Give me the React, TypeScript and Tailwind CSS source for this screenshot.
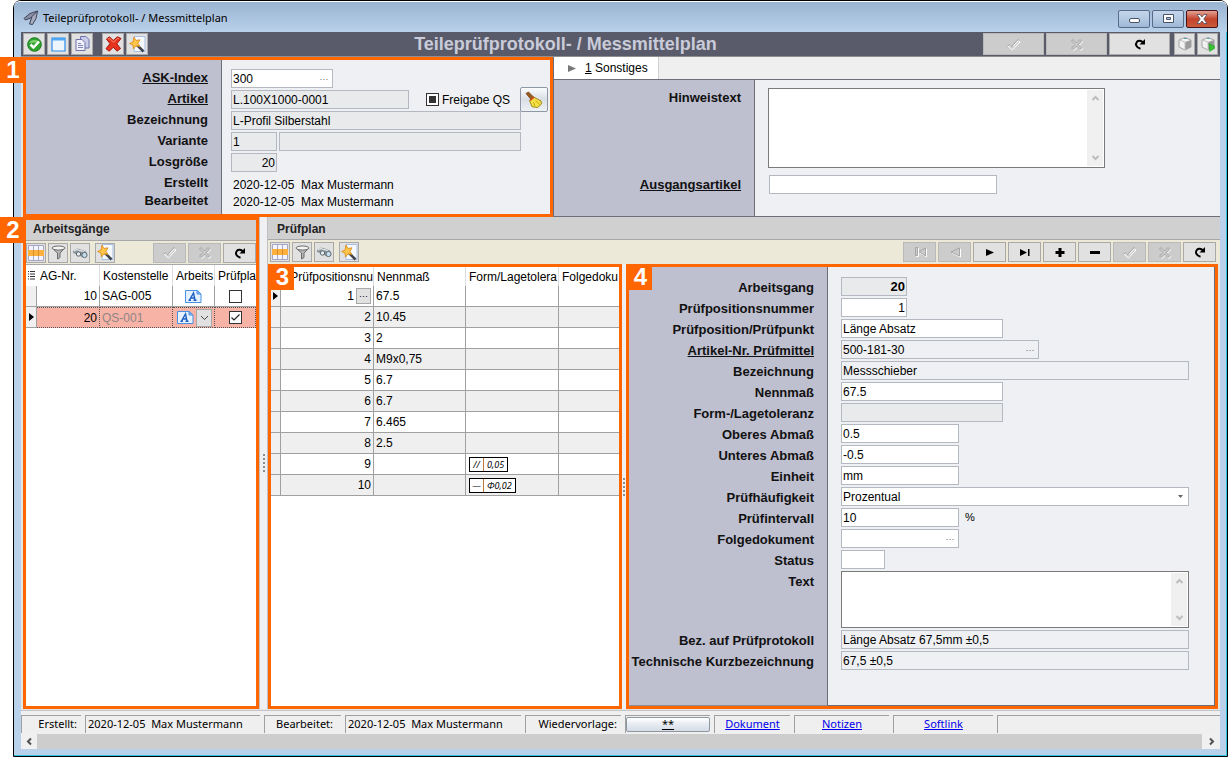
import type { ReactNode } from 'react';
import { clsx } from 'clsx';

const BTN = 'flex shrink-0 items-center justify-center border border-[#a9a9a9] bg-[#e1e1e1]';
const BTN_OFF = 'flex shrink-0 items-center justify-center border border-[#b9b9b9] bg-[#cccccc]';
const LABEL = 'block whitespace-nowrap text-right text-[13px] font-bold leading-[19px] text-[#111]';

/* ---------- icons ---------- */

function CheckIcon() {
  return (
    <svg width="15" height="13" viewBox="0 0 15 13" fill="none">
      <path d="M2 8l2-1.500 2.500 2.500L12.500 2.500l1.500 1.500-7.500 8z" fill="#cccccc" stroke="#fff" />
      <path d="M6.500 9 4 6.500 1.500 8M5.500 8.500 12 1.500l1 1" stroke="#a3a3a3" />
    </svg>
  );
}

function CrossIcon() {
  const outline = 'M1.500 3 3 1.500l3.500 3.500L10 1.500 11.500 3 8 6.500l3.500 3.500-1.500 1.500L6.500 8 3 11.500 1.500 10 5 6.500z';
  return (
    <svg width="13" height="13" viewBox="0 0 13 13" fill="none">
      <path d={outline} stroke="#fff" transform="translate(1 1)" />
      <path d={outline} fill="#cccccc" stroke="#a3a3a3" />
    </svg>
  );
}

function RefreshIcon() {
  return (
    <svg width="12" height="12" viewBox="0 0 12 12" fill="none">
      <path d="M6.500 10.800C2 9.500 1 6 3 3.800 4.500 2.300 7 2.500 9 4.500" stroke="#000" strokeWidth="2" />
      <path d="M11 1v5.500H5.500z" fill="#000" />
    </svg>
  );
}

function WizardIcon() {
  return (
    <svg width="17" height="17" viewBox="0 0 17 17" fill="none">
      <path d="M5 .5h11v15H5z" fill="#f4f8ff" stroke="#a9bfdf" />
      <path d="M8 9l6.500 6.500" stroke="#3f4450" strokeWidth="2.500" />
      <path d="M5 1l2 3.500 4-.7-2 3.700 2 3-4-.7L4.500 13 4 9 .5 7.500 4 6z" fill="#ffc54a" stroke="#d98a12" strokeWidth=".8" />
    </svg>
  );
}

function GridIcon() {
  return (
    <svg width="16" height="16" viewBox="0 0 16 16">
      <path d="M.5.5h15v15H.5z" fill="#f4f4fc" stroke="#a4a4c4" />
      <path d="M5.500 1v14M10.500 1v14" stroke="#a9a9c9" />
      <path d="M0 5h16v6H0z" fill="#fbb040" />
      <path d="M5.500 5v6M10.500 5v6" stroke="#d98f2a" />
    </svg>
  );
}

function FunnelIcon() {
  return (
    <svg width="15" height="15" viewBox="0 0 15 15">
      <path d="M1 3l5.500 5v6l2.500-1.500V8L14 3z" fill="#b5b5b5" stroke="#6d6d6d" />
      <ellipse cx="7.500" cy="3" rx="6.500" ry="2" fill="#f4f4f4" stroke="#6d6d6d" />
    </svg>
  );
}

function BinocularsIcon() {
  return (
    <svg width="16" height="12" viewBox="0 0 16 12">
      <path d="M1 4 5 1.500l4 1 5 2 1 3-4 3-5-2.500-5-2z" fill="#8d979c" />
      <path d="M2 4l3-1.500 3 1.500M7 4l2-.5 3 1.500" fill="none" stroke="#dfe5e8" strokeWidth="1.300" />
      <circle cx="6.500" cy="7" r="2.200" fill="#e3eaf0" stroke="#5d676e" />
      <circle cx="12.500" cy="8" r="2.600" fill="#c4def2" stroke="#5d676e" />
    </svg>
  );
}

function OkIcon() {
  return (
    <svg width="15" height="15" viewBox="0 0 15 15" fill="none">
      <circle cx="7.500" cy="7.500" r="6.800" fill="#2fa32f" stroke="#187a1a" />
      <path d="M2 6a6 5 0 0 1 11 0q-5-1-11 0z" fill="#7fd070" />
      <path d="M3.500 7.500 6.500 10.500l5.500-6" stroke="#fff" strokeWidth="2.500" />
    </svg>
  );
}

function WindowIcon() {
  return (
    <svg width="15" height="15" viewBox="0 0 15 15">
      <path d="M1 1h13v13H1z" fill="#edf5ff" stroke="#2b8be8" strokeWidth="1.200" />
      <path d="M1 1h13v2.500H1z" fill="#4ea6f5" />
    </svg>
  );
}

function CopyIcon() {
  return (
    <svg width="15" height="16" viewBox="0 0 15 16" fill="none">
      <path d="M5.500.5h5.500l3 3v8.500H5.500z" fill="#c9cdea" stroke="#6d73a8" />
      <path d="M1 3.500h6l3 3v8H1z" fill="#f0f1fa" stroke="#6d73a8" />
      <path d="M3 7.500h3M3 9.500h5M3 11.500h5" stroke="#7f86b8" />
    </svg>
  );
}

function DeleteIcon() {
  return (
    <svg width="17" height="16" viewBox="0 0 17 16">
      <path d="M1.500 3 4.500.8 8.200 4.500 12.500.8 16 2.500 11.800 7.800l3.700 4.700-3.500 2.700-3.700-4-4 4L1 12.700l4-5z" fill="#e8341f" stroke="#a51408" />
      <path d="M3 3.200l1.500-1 4 4 4-4 1.500.8" fill="none" stroke="#ff8f78" />
    </svg>
  );
}

function CubeIcon({ play }: { play?: boolean }) {
  return (
    <svg width="16" height="16" viewBox="0 0 16 16">
      <path d="M2 4l6-2.500L14 4v7l-6 3-6-3z" fill="#f2f2f2" stroke="#a5a5a5" />
      <path d="M8 6l6-2v7l-6 3z" fill="#9b9b9b" />
      <path d="M2 4l6 2v8" fill="none" stroke="#c2c2c2" />
      <path d="M7 2.500h3" stroke="#5fa9b5" />
      {play && <path d="M9 7.500 14.500 10v2.500l-5 3z" fill="#35c235" stroke="#1c921c" strokeWidth=".5" />}
    </svg>
  );
}

function BroomIcon() {
  return (
    <svg width="18" height="18" viewBox="0 0 18 18">
      <path d="M1 2.500 3.500 1l5 5-2.500 2.500z" fill="#9a5b1f" stroke="#6a3a0c" strokeWidth=".7" />
      <path d="M8.500 6l7.500 4 .5 3-4 3.500-5.500-.8L4.500 9.500z" fill="#f6e04a" stroke="#a08a10" />
      <path d="M5 9.500 9 6.200" stroke="#d1421c" strokeWidth="1.500" />
      <path d="M8.500 11l1.500 4M10.500 9.500l4 4" stroke="#c7ac1e" />
    </svg>
  );
}

function DocIcon() {
  return (
    <svg width="17" height="13" viewBox="0 0 17 13" fill="none">
      <path d="M.5.5H12l4 3.500v8.500H.5z" fill="#e6f1ff" stroke="#4a90e2" />
      <path d="M12 .5V4h4z" fill="#8fbdf2" stroke="#4a90e2" />
      <path d="M4.500 10 8.500 3l1.500 7M6 8h3.500M3.500 10.300h2.500M8.500 10.300h3" stroke="#1e5fc4" strokeWidth="1.400" />
    </svg>
  );
}

function Tri({ kind }: { kind: 'first' | 'prev' | 'next' | 'last' | 'plus' | 'minus' }) {
  return (
    <svg width="14" height="11" viewBox="0 0 14 11" fill="none">
      {kind === 'first' && (
        <>
          <path d="M3.500 1.500v8h2v-8zM13.500 2v8L7 6z" stroke="#fff" />
          <path d="M2.500.5v8h2v-8zM12.500 1v8L6 4.500z" fill="#ccc" stroke="#a6a6a6" />
        </>
      )}
      {kind === 'prev' && (
        <>
          <path d="M12.500 2v8L4 6z" stroke="#fff" />
          <path d="M11.500 1v8L3 5z" fill="#ccc" stroke="#a6a6a6" />
        </>
      )}
      {kind === 'next' && <path d="M3 2v7l8-3.500z" fill="#000" />}
      {kind === 'last' && <path d="M2 2v7l7-3.500zM10 2h1.500v7H10z" fill="#000" />}
      {kind === 'plus' && <path d="M2.500 4h3V1h3v3h3v3h-3v3h-3V7h-3z" fill="#000" />}
      {kind === 'minus' && <path d="M2 4h10v3H2z" fill="#000" />}
    </svg>
  );
}

function Chevron({ dir, dark }: { dir: 'up' | 'down' | 'left' | 'right'; dark?: boolean }) {
  const paths = {
    up: 'M1.500 6 4.500 3l3 3',
    down: 'M1.500 3l3 3 3-3',
    left: 'M6 1.500l-3 3 3 3',
    right: 'M3 1.500l3 3-3 3',
  };
  return (
    <svg width="9" height="9" viewBox="0 0 9 9" fill="none">
      <path d={paths[dir]} stroke={dark ? '#505050' : '#bdbdbd'} strokeWidth="2" />
    </svg>
  );
}

/* ---------- building blocks ---------- */

function Badge({ n, outside }: { n: number; outside?: boolean }) {
  return (
    <div
      className={clsx(
        'absolute z-10 flex h-[26px] items-center justify-center bg-[#ff6600] text-2xl font-bold text-white',
        outside ? 'top-[-3px] left-[-26px] w-[26px]' : 'top-[-3px] left-0 w-[23px]'
      )}
    >
      {n}
    </div>
  );
}

interface FieldProps {
  id: string;
  value?: string;
  width: string;
  tone?: 'edit' | 'grey' | 'flat';
  right?: boolean;
  bold?: boolean;
  dots?: boolean;
}

function Field({ id, value = '', width, tone = 'edit', right, bold, dots }: FieldProps) {
  return (
    <div
      className={clsx(
        'flex h-[19px] border border-[#b4b8c0]',
        width,
        tone === 'edit' && 'bg-white',
        tone === 'grey' && 'bg-[#e9eaec]',
        tone === 'flat' && 'bg-[#eff0f3]'
      )}
    >
      <input
        id={id}
        defaultValue={value}
        readOnly={tone !== 'edit'}
        className={clsx(
          'min-w-0 flex-1 bg-transparent px-px outline-none',
          right && 'text-right',
          bold ? 'text-[13px] font-bold' : 'text-xs'
        )}
      />
      {dots && (
        <button aria-label="Auswählen" className="w-4 text-[9px] leading-3 text-[#666]">
          ···
        </button>
      )}
    </div>
  );
}

function Memo({ id, className }: { id: string; className: string }) {
  return (
    <div className={clsx('flex border border-[#7a7a7a] bg-white p-px', className)}>
      <textarea id={id} className="min-w-0 flex-1 resize-none text-xs outline-none" />
      <div className="flex w-4 flex-col items-center justify-between bg-[#f0f0f0] py-1">
        <Chevron dir="up" />
        <Chevron dir="down" />
      </div>
    </div>
  );
}

function Tools() {
  const icons = [
    { name: 'Spalten', icon: <GridIcon /> },
    { name: 'Filter', icon: <FunnelIcon /> },
    { name: 'Suchen', icon: <BinocularsIcon /> },
    { name: 'Assistent', icon: <WizardIcon /> },
  ];
  return (
    <div className="flex gap-[2px]">
      {icons.map((i) => (
        <button key={i.name} aria-label={i.name} className={clsx(BTN, 'h-5 w-5 last:ml-[3px]')}>
          {i.icon}
        </button>
      ))}
    </div>
  );
}

function ToolButton({ label, off, children }: { label: string; off?: boolean; children: ReactNode }) {
  return (
    <button aria-label={label} disabled={off} className={clsx(off ? BTN_OFF : BTN, 'h-5 w-[33px]')}>
      {children}
    </button>
  );
}

function TickBox({ label, checked }: { label: string; checked?: boolean }) {
  return (
    <span className="inline-grid size-[13px] place-items-center">
      <input
        type="checkbox"
        aria-label={label}
        defaultChecked={checked}
        className="col-start-1 row-start-1 size-[13px] appearance-none border border-[#333] bg-white"
      />
      {checked && (
        <svg className="pointer-events-none col-start-1 row-start-1" width="11" height="11" viewBox="0 0 11 11" fill="none">
          <path d="M1.500 5.500 4 8l5.500-5.500" stroke="#222" strokeWidth="1.200" />
        </svg>
      )}
    </span>
  );
}

function RowMark({ active }: { active?: boolean }) {
  return (
    <td className="border-r border-b border-[#a0a0a0] bg-[#f0f0f0] p-0">
      {active && (
        <svg className="mx-auto block" width="5" height="8" viewBox="0 0 5 8">
          <path d="M0 0v8l5-4z" fill="#000" />
        </svg>
      )}
    </td>
  );
}

function Grip() {
  return (
    <div className="flex flex-col gap-[2px]">
      {[0, 1, 2, 3, 4].map((i) => (
        <span key={i} className="h-[2px] w-[2px] bg-[#8c8c8c]" />
      ))}
    </div>
  );
}

/* ---------- data ---------- */

const POSITIONS = [
  { nr: 1, nenn: '67.5' },
  { nr: 2, nenn: '10.45' },
  { nr: 3, nenn: '2' },
  { nr: 4, nenn: 'M9x0,75' },
  { nr: 5, nenn: '6.7' },
  { nr: 6, nenn: '6.7' },
  { nr: 7, nenn: '6.465' },
  { nr: 8, nenn: '2.5' },
  { nr: 9, nenn: '', tol: ['//', '0,05'] },
  { nr: 10, nenn: '', tol: ['—', 'Φ0,02'] },
];

const DETAIL_LABELS = [
  { id: 'ag', text: 'Arbeitsgang' },
  { id: 'pos', text: 'Prüfpositionsnummer' },
  { id: 'punkt', text: 'Prüfposition/Prüfpunkt' },
  { id: 'mittel', text: 'Artikel-Nr. Prüfmittel', link: true },
  { id: 'bez', text: 'Bezeichnung' },
  { id: 'nenn', text: 'Nennmaß' },
  { id: 'form', text: 'Form-/Lagetoleranz' },
  { id: 'ober', text: 'Oberes Abmaß' },
  { id: 'unter', text: 'Unteres Abmaß' },
  { id: 'einheit', text: 'Einheit' },
  { id: 'haeufig', text: 'Prüfhäufigkeit' },
  { id: 'intervall', text: 'Prüfintervall' },
  { id: 'folge', text: 'Folgedokument' },
  { id: 'status', text: 'Status' },
  { id: 'text', text: 'Text', tall: true },
  { id: 'protokoll', text: 'Bez. auf Prüfprotokoll' },
  { id: 'kurz', text: 'Technische Kurzbezeichnung' },
];

const HEAD_CELL = 'overflow-hidden whitespace-nowrap border-r border-[#dcdcdc] p-0 pl-[3px] text-left font-normal last:border-r-0';
const CELL = 'overflow-hidden whitespace-nowrap border-r border-b border-[#a0a0a0] px-[2px] py-0 last:border-r-0';
const CELL_ACTIVE = 'overflow-hidden whitespace-nowrap border-t border-r border-b border-dotted border-[#555] px-[2px] py-0';

/* ---------- sections ---------- */

function TitleBar() {
  return (
    <div className="flex h-[31px] items-center rounded-t-md border-t border-white bg-linear-to-b from-[#9ab3d1] to-[#b9d1ea] px-[9px] pt-[3px]">
      <svg width="16" height="17" viewBox="0 0 16 17" fill="none">
        <path d="M14.500 1 7 3.500 1 8.500l1.500 1.500L10 7z" fill="#8b8fa6" stroke="#3d4157" />
        <path d="M14.500 1 9 6.500l-2.500 7.500 3 .5 3.500-6z" fill="#a9acbf" stroke="#3d4157" />
      </svg>
      <span className="ml-1 flex-1 font-['Noto_Sans','Open_Sans',sans-serif] text-[11px] text-black">
        Teileprüfprotokoll- / Messmittelplan
      </span>
      <div className="flex gap-[2px]">
        <button aria-label="Minimieren" className="flex h-[18px] w-8 items-center justify-center rounded-xs border border-[#566b8a] bg-linear-to-b from-[#c4d5ea] via-[#b4c9e2] to-[#9db8d6] pt-1">
          <span className="h-[5px] w-[11px] rounded-xs border border-[#4a5468] bg-white" />
        </button>
        <button aria-label="Maximieren" className="flex h-[18px] w-8 items-center justify-center rounded-xs border border-[#566b8a] bg-linear-to-b from-[#c4d5ea] via-[#b4c9e2] to-[#9db8d6]">
          <svg width="11" height="9" viewBox="0 0 11 9">
            <path d="M.5.5h10v8H.5z" fill="#fff" stroke="#4a5468" />
            <path d="M3.500 3.500h4v2h-4z" fill="#a9c0dc" stroke="#4a5468" />
          </svg>
        </button>
        <button aria-label="Schließen" className="flex h-[18px] w-8 items-center justify-center rounded-xs border border-[#4b1216] bg-linear-to-b from-[#e2a295] via-[#c3432c] to-[#c95a3c]">
          <svg width="12" height="10" viewBox="0 0 12 10">
            <path d="M1 .5h3L6 3 8 .5h3L7.800 5 11 9.500H8L6 7 4 9.500H1L4.200 5z" fill="#fff" stroke="#4b4b5c" strokeWidth=".8" />
          </svg>
        </button>
      </div>
    </div>
  );
}

function MainToolbar() {
  const btn = clsx(BTN, 'size-[22px]');
  return (
    <div className="flex h-[25px] items-center border-b border-[#8f8f8f] bg-[#595b6b] px-[2px]">
      <div className="flex gap-[2px]">
        <button aria-label="Übernehmen" className={btn}><OkIcon /></button>
        <button aria-label="Fenster" className={btn}><WindowIcon /></button>
        <button aria-label="Kopieren" className={btn}><CopyIcon /></button>
        <button aria-label="Löschen" className={clsx(btn, 'ml-[7px]')}><DeleteIcon /></button>
        <button aria-label="Assistent" className={btn}><WizardIcon /></button>
      </div>
      <h1 className="flex-1 text-center text-lg leading-6 font-bold whitespace-nowrap text-[#c9cbd9]">
        Teileprüfprotokoll- / Messmittelplan
      </h1>
      <div className="flex gap-[2px]">
        <button aria-label="Speichern" disabled className={clsx(BTN_OFF, 'h-[22px] w-[61px]')}><CheckIcon /></button>
        <button aria-label="Verwerfen" disabled className={clsx(BTN_OFF, 'h-[22px] w-[61px]')}><CrossIcon /></button>
        <button aria-label="Aktualisieren" className={clsx(BTN, 'h-[22px] w-[61px]')}><RefreshIcon /></button>
        <button aria-label="Modul" className={clsx(BTN, 'ml-[2px] h-[22px] w-[21px]')}><CubeIcon /></button>
        <button aria-label="Modul starten" className={clsx(BTN, 'h-[22px] w-[21px]')}><CubeIcon play /></button>
      </div>
    </div>
  );
}

function HeadForm() {
  return (
    <section className="relative ml-[2px] flex w-[530px] shrink-0 border-3 border-[#ff6600] bg-[#eff0f3]">
      <Badge n={1} outside />
      <div className="flex w-[196px] shrink-0 flex-col gap-[2px] border-r border-[#6e6e78] bg-[#bebfcf] pt-2 pr-[13px]">
        <label htmlFor="index" className={clsx(LABEL, 'underline')}>ASK-Index</label>
        <label htmlFor="artikel" className={clsx(LABEL, 'underline')}>Artikel</label>
        <label htmlFor="bezeichnung" className={LABEL}>Bezeichnung</label>
        <label htmlFor="variante" className={LABEL}>Variante</label>
        <label htmlFor="los" className={LABEL}>Losgröße</label>
        <span className={LABEL}>Erstellt</span>
        <span className={clsx(LABEL, '-mt-[3px]')}>Bearbeitet</span>
      </div>
      <div className="flex flex-col gap-[2px] pt-[9px] pl-[9px]">
        <Field id="index" value="300" width="w-[102px]" dots />
        <div className="flex h-[19px] items-center">
          <Field id="artikel" value="L.100X1000-0001" width="w-[178px]" tone="grey" />
          <label className="ml-[17px] flex items-center gap-[3px] text-xs whitespace-nowrap">
            <input
              type="checkbox"
              className="size-[13px] appearance-none border border-[#333] bg-[#333] shadow-[inset_0_0_0_2px_white]"
            />
            Freigabe QS
          </label>
          <button
            aria-label="Leeren"
            className="ml-auto -mr-[27px] flex h-[25px] w-7 shrink-0 items-center justify-center rounded-xs border border-[#8e98a5] bg-linear-to-b from-[#fbfcfd] via-[#d9dfe6] to-[#eef1f4]"
          >
            <BroomIcon />
          </button>
        </div>
        <Field id="bezeichnung" value="L-Profil Silberstahl" width="w-[290px]" tone="grey" />
        <div className="flex gap-[2px]">
          <Field id="variante" value="1" width="w-[46px]" tone="grey" />
          <Field id="variante2" width="w-[242px]" tone="grey" />
        </div>
        <Field id="los" value="20" width="w-[46px]" tone="grey" right />
        <p className="mt-[3px] pl-[2px] text-xs leading-[17px] whitespace-pre">{'2020-12-05  Max Mustermann'}</p>
        <p className="-mt-[2px] pl-[2px] text-xs leading-[17px] whitespace-pre">{'2020-12-05  Max Mustermann'}</p>
      </div>
    </section>
  );
}

function MiscForm() {
  return (
    <section className="flex min-w-0 flex-1 flex-col border-b border-l border-[#6e6e78]">
      <div className="flex h-[23px] border-b border-[#6e6e78] bg-[#efefef]">
        <button className="flex items-center border-r border-[#d0d0d0] bg-white pr-[10px] pl-[14px] text-xs">
          <svg className="mr-[9px]" width="8" height="7" viewBox="0 0 8 7">
            <path d="M0 0v7l8-3.500z" fill="#777" />
          </svg>
          <span>
            <span className="underline">1</span> Sonstiges
          </span>
        </button>
      </div>
      <div className="flex flex-1">
        <div className="flex w-[201px] shrink-0 flex-col border-r border-[#6e6e78] bg-[#bebfcf] pt-2 pr-[13px]">
          <label htmlFor="hinweis" className={clsx(LABEL, 'h-[87px]')}>Hinweistext</label>
          <label htmlFor="ausgang" className={clsx(LABEL, 'underline')}>Ausgangsartikel</label>
        </div>
        <div className="flex flex-1 flex-col gap-[7px] bg-[#eff0f3] pt-2 pl-[13px]">
          <Memo id="hinweis" className="h-20 w-[337px]" />
          <div className="pl-px">
            <Field id="ausgang" width="w-[228px]" />
          </div>
        </div>
      </div>
    </section>
  );
}

function Operations() {
  return (
    <section className="relative ml-[2px] flex w-[236px] shrink-0 flex-col border-3 border-[#ff6600] bg-white">
      <Badge n={2} outside />
      <h2 className="h-5 bg-[#d0d0d0] pl-[7px] text-xs leading-[18px] font-bold text-[#222]">Arbeitsgänge</h2>
      <div className="flex h-[25px] items-center justify-between border-t border-b border-[#a8a8a8] bg-[#ece9d8]">
        <Tools />
        <div className="flex gap-[2px]">
          <ToolButton label="Speichern" off><CheckIcon /></ToolButton>
          <ToolButton label="Verwerfen" off><CrossIcon /></ToolButton>
          <ToolButton label="Aktualisieren"><RefreshIcon /></ToolButton>
        </div>
      </div>
      <table className="w-full table-fixed border-separate border-spacing-0 text-xs">
        <colgroup>
          <col className="w-[11px]" />
          <col className="w-[63px]" />
          <col className="w-[73px]" />
          <col className="w-[42px]" />
          <col />
        </colgroup>
        <thead>
          <tr className="h-[21px]">
            <th className="p-0">
              <svg className="mx-auto block" width="8" height="9" viewBox="0 0 8 9">
                <path d="M0 .5h1M2 .5h5M0 3h1M2 3h5M0 5.500h1M2 5.500h5M0 8h1M2 8h5" stroke="#333" />
              </svg>
            </th>
            <th className={HEAD_CELL}>AG-Nr.</th>
            <th className={HEAD_CELL}>Kostenstelle</th>
            <th className={HEAD_CELL}>Arbeits</th>
            <th className={HEAD_CELL}>Prüfpla</th>
          </tr>
        </thead>
        <tbody>
          <tr className="h-[21px]">
            <RowMark />
            <td className={clsx(CELL, 'text-right')}>10</td>
            <td className={CELL}>SAG-005</td>
            <td className={CELL}>
              <span className="flex justify-center"><DocIcon /></span>
            </td>
            <td className={CELL}>
              <span className="flex justify-center"><TickBox label="Prüfplan 10" /></span>
            </td>
          </tr>
          <tr className="h-[21px] bg-[#f7b3a6]">
            <RowMark active />
            <td className={clsx(CELL_ACTIVE, 'text-right')}>20</td>
            <td className={clsx(CELL_ACTIVE, 'text-[#8f8585]')}>QS-001</td>
            <td className={CELL_ACTIVE}>
              <span className="flex items-center justify-between pl-[2px]">
                <DocIcon />
                <button aria-label="Arbeitsanweisung wählen" className="flex h-[18px] w-4 items-center justify-center border border-[#a9a9a9] bg-[#e1e1e1]">
                  <svg width="9" height="6" viewBox="0 0 9 6" fill="none">
                    <path d="M1 1l3.500 3.500L8 1" stroke="#444" />
                  </svg>
                </button>
              </span>
            </td>
            <td className={CELL_ACTIVE}>
              <span className="flex justify-center"><TickBox label="Prüfplan 20" checked /></span>
            </td>
          </tr>
        </tbody>
      </table>
    </section>
  );
}

function PositionTable() {
  return (
    <section className="relative w-[354px] shrink-0 border-3 border-[#ff6600] bg-white">
      <Badge n={3} />
      <table className="w-full table-fixed border-separate border-spacing-0 text-xs">
        <colgroup>
          <col className="w-[10px]" />
          <col className="w-[93px]" />
          <col className="w-[92px]" />
          <col className="w-[93px]" />
          <col />
        </colgroup>
        <thead>
          <tr className="h-[19px]">
            <th className="p-0" />
            <th className={HEAD_CELL}>
              <span className="block text-right">Prüfpositionsnu</span>
            </th>
            <th className={HEAD_CELL}>Nennmaß</th>
            <th className={HEAD_CELL}>Form/Lagetolera</th>
            <th className={HEAD_CELL}>Folgedoku</th>
          </tr>
        </thead>
        <tbody>
          {POSITIONS.map((p) => (
            <tr key={p.nr} className="h-[21px] odd:bg-white even:bg-[#efefef]">
              <RowMark active={p.nr === 1} />
              <td className={clsx(CELL, 'text-right')}>
                {p.nr === 1 ? (
                  <span className="flex items-center justify-end gap-[2px]">
                    1
                    <button aria-label="Auswählen" className="h-4 w-[15px] border border-[#a9a9a9] bg-[#e1e1e1] text-[9px] leading-3">
                      ···
                    </button>
                  </span>
                ) : (
                  p.nr
                )}
              </td>
              <td className={CELL}>{p.nenn}</td>
              <td className={CELL}>
                {p.tol && (
                  <span className="ml-px flex h-[15px] w-fit border border-black bg-white font-['Noto_Sans',sans-serif] text-[9px] leading-[13px] italic">
                    <span className="w-[14px] border-r border-[#c07a40] text-center">{p.tol[0]}</span>
                    <span className="px-[3px]">{p.tol[1]}</span>
                  </span>
                )}
              </td>
              <td className={CELL} />
            </tr>
          ))}
        </tbody>
      </table>
    </section>
  );
}

function DetailForm() {
  return (
    <section className="relative mr-[2px] flex min-w-0 flex-1 border-3 border-[#ff6600] bg-[#eff0f3]">
      <Badge n={4} />
      <div className="flex w-[199px] shrink-0 flex-col gap-[2px] border-r border-b border-r-[#6e6e78] border-b-[#8d8d98] bg-[#bebfcf] pt-[11px] pr-[13px]">
        {DETAIL_LABELS.map((l) => (
          <label
            key={l.id}
            htmlFor={l.id}
            className={clsx(LABEL, 'flex justify-end', l.link && 'underline', l.tall ? 'h-[57px]' : 'h-[19px]')}
          >
            {l.text}
          </label>
        ))}
      </div>
      <div className="flex min-w-0 flex-1 flex-col gap-[2px] border-r border-b border-[#6e6e78] pt-[10px] pr-[25px] pl-[13px]">
        <Field id="ag" value="20" width="w-[66px]" tone="grey" right bold />
        <Field id="pos" value="1" width="w-[66px]" right />
        <Field id="punkt" value="Länge Absatz" width="w-[162px]" />
        <Field id="mittel" value="500-181-30" width="w-[198px]" tone="flat" dots />
        <Field id="bez" value="Messschieber" width="w-full" tone="flat" />
        <Field id="nenn" value="67.5" width="w-[162px]" />
        <Field id="form" width="w-[162px]" tone="grey" />
        <Field id="ober" value="0.5" width="w-[118px]" />
        <Field id="unter" value="-0.5" width="w-[118px]" />
        <Field id="einheit" value="mm" width="w-[118px]" />
        <div className="grid h-[19px] items-center">
          <select id="haeufig" className="col-start-1 row-start-1 h-[19px] w-full appearance-none border border-[#b4b8c0] bg-white px-px text-xs leading-4 outline-none">
            <option>Prozentual</option>
          </select>
          <svg className="pointer-events-none col-start-1 row-start-1 mr-[6px] justify-self-end" width="5" height="3" viewBox="0 0 5 3">
            <path d="M0 0h5L2.500 3z" fill="#666" />
          </svg>
        </div>
        <div className="flex h-[19px] items-center gap-[6px]">
          <Field id="intervall" value="10" width="w-[118px]" />
          <span className="text-[11px]">%</span>
        </div>
        <Field id="folge" width="w-[118px]" dots />
        <Field id="status" width="w-[44px]" />
        <Memo id="text" className="h-[57px] w-full" />
        <Field id="protokoll" value="Länge Absatz 67,5mm ±0,5" width="w-full" tone="flat" />
        <Field id="kurz" value="67,5 ±0,5" width="w-full" tone="flat" />
      </div>
    </section>
  );
}

function StatusBar() {
  const cell = 'flex h-[18px] shrink-0 items-center border-t border-l border-[#a0a0a0] whitespace-pre';
  return (
    <footer className="flex h-[24px] items-center gap-1 border-t border-[#c4c4c4] bg-[#efefef] pt-[2px] font-['Noto_Sans','Open_Sans',sans-serif] text-[11px]">
      <span className={clsx(cell, 'w-[60px] justify-end pr-1')}>Erstellt:</span>
      <span className={clsx(cell, 'w-[175px] pl-[2px]')}>{'2020-12-05  Max Mustermann'}</span>
      <span className={clsx(cell, 'w-[77px] justify-end pr-2')}>Bearbeitet:</span>
      <span className={clsx(cell, 'w-[176px] pl-[2px]')}>{'2020-12-05  Max Mustermann'}</span>
      <span className={clsx(cell, 'w-24 justify-end pr-1')}>Wiedervorlage:</span>
      <span className={clsx(cell, 'w-[85px]')}>
        <button aria-label="Wiedervorlage" className="flex h-[15px] flex-1 items-center justify-center rounded-xs border border-[#8e98a5] bg-linear-to-b from-white via-[#e6ebf1] to-[#d5dce5] leading-3 underline">
          **
        </button>
      </span>
      <span className={clsx(cell, 'w-[76px] justify-center')}><a href="#dokument" className="text-[#0000ee] underline">Dokument</a></span>
      <span className={clsx(cell, 'w-[95px] justify-center')}><a href="#notizen" className="text-[#0000ee] underline">Notizen</a></span>
      <span className={clsx(cell, 'w-[100px] justify-center')}><a href="#softlink" className="text-[#0000ee] underline">Softlink</a></span>
      <span className="h-[18px] flex-1 border-t border-l border-[#a0a0a0]" />
    </footer>
  );
}

export default function App() {
  return (
    <div className="flex min-h-screen bg-white pl-[13px] font-['Liberation_Sans',Arial,sans-serif] text-black">
      <div className="flex min-w-0 flex-1 flex-col rounded-t-lg border border-black bg-[#b9d1ea]">
        <TitleBar />
        <div className="flex flex-1 flex-col border-r border-b border-[#2fc4dd] pr-[6px] pb-[6px] pl-[7px]">
          <main className="flex flex-1 flex-col bg-[#e4e5e7]">
            <MainToolbar />
            <div className="flex h-[160px]">
              <HeadForm />
              <MiscForm />
            </div>
            <div className="flex flex-1 pb-px">
              <Operations />
              <div className="flex w-[9px] shrink-0 items-center justify-center border-x border-[#c0c0c4] bg-[#f0f0f2]">
                <Grip />
              </div>
              <div className="flex min-w-0 flex-1 flex-col">
                <h2 className="h-[22px] bg-[#d0d0d0] pl-[9px] text-xs leading-6 font-bold text-[#222]">Prüfplan</h2>
                <div className="flex h-[25px] items-center justify-between border-t border-[#a8a8a8] bg-[#ece9d8] pr-1 pl-[2px]">
                  <Tools />
                  <div className="flex gap-[2px]">
                    <ToolButton label="Erster" off><Tri kind="first" /></ToolButton>
                    <ToolButton label="Zurück" off><Tri kind="prev" /></ToolButton>
                    <ToolButton label="Weiter"><Tri kind="next" /></ToolButton>
                    <ToolButton label="Letzter"><Tri kind="last" /></ToolButton>
                    <ToolButton label="Neu"><Tri kind="plus" /></ToolButton>
                    <ToolButton label="Entfernen"><Tri kind="minus" /></ToolButton>
                    <ToolButton label="Speichern" off><CheckIcon /></ToolButton>
                    <ToolButton label="Verwerfen" off><CrossIcon /></ToolButton>
                    <ToolButton label="Aktualisieren"><RefreshIcon /></ToolButton>
                  </div>
                </div>
                <div className="flex flex-1">
                  <PositionTable />
                  <div className="flex w-1 shrink-0 items-center justify-center bg-[#f0f0f2]">
                    <Grip />
                  </div>
                  <DetailForm />
                </div>
              </div>
            </div>
            <StatusBar />
            <div className="flex h-[15px] bg-[#cdcdcd]">
              <button aria-label="Nach links" className="flex w-4 items-center justify-center bg-[#f0f0f0]"><Chevron dir="left" dark /></button>
              <span className="flex-1" />
              <button aria-label="Nach rechts" className="flex w-[18px] items-center justify-center bg-[#f0f0f0]"><Chevron dir="right" dark /></button>
            </div>
          </main>
        </div>
      </div>
    </div>
  );
}
